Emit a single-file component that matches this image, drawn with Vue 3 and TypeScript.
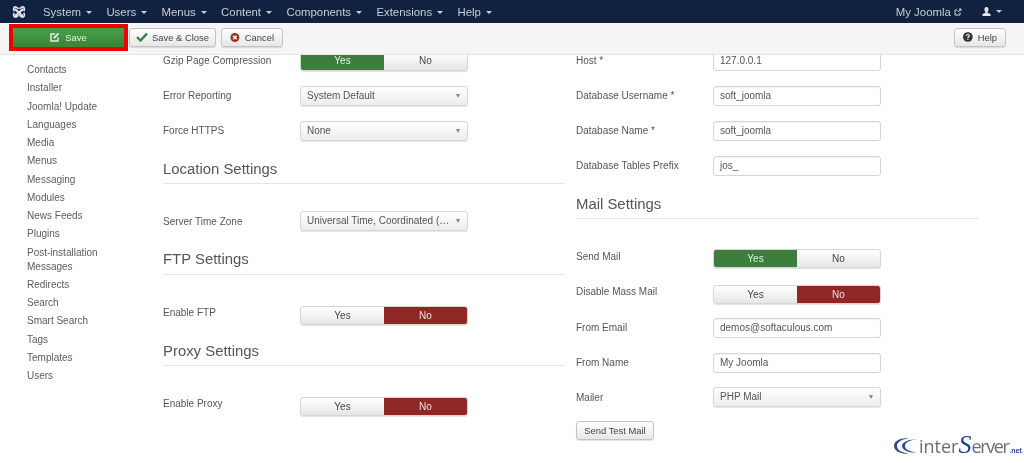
<script setup lang="ts">
const menus: string[] = ['System', 'Users', 'Menus', 'Content', 'Components', 'Extensions', 'Help']
const side: string[] = ['Contacts', 'Installer', 'Joomla! Update', 'Languages', 'Media', 'Menus', 'Messaging', 'Modules', 'News Feeds', 'Plugins', 'Post-installation Messages', 'Redirects', 'Search', 'Smart Search', 'Tags', 'Templates', 'Users']
const dbRows: { label: string; value: string }[] = [
  { label: 'Database Username *', value: 'soft_joomla' },
  { label: 'Database Name *', value: 'soft_joomla' },
  { label: 'Database Tables Prefix', value: 'jos_' },
]
</script>

<template>
  <div class="page">
    <header class="nav">
      <svg class="logo" width="14" height="14" viewBox="0 0 14 14" aria-hidden="true">
        <g fill="none" stroke="#dfe3ea" stroke-linecap="round">
          <path d="M3.500 4.500C5 6 8 9 10 10.500M10.500 4.500C9 6 6 9 3.500 10.500" stroke-width="2.200" />
          <path d="M2 5.500C1 3.500 2 1.500 4 2c1 .2 1.500 1 2 1.500M12 5.500c1-2 0-4-2-3.500-1 .2-1.500 1-2 1.500M2 8.500c-1 2 0 4 2 3.500 1-.2 1.500-1 2-1.500M12 8.500c1 2 0 4-2 3.500-1-.2-1.500-1-2-1.500" stroke-width="1.700" />
        </g>
      </svg>
      <span v-for="m in menus" :key="m" class="menu">{{ m }}<i class="caret"></i></span>
      <span class="nav-right">
        <span class="site">My Joomla
          <svg width="8" height="8" viewBox="0 0 8 8" aria-hidden="true"><path d="M6 4.500V7H1V2h2.500M4 4l3-3M5 1h2v2" fill="none" stroke="#d5dae3" stroke-width="1" /></svg>
        </span>
        <span class="user">
          <svg width="9" height="10" viewBox="0 0 9 10" aria-hidden="true"><path d="M4.500 0C3 0 2.400 1 2.400 2.400c0 1 .5 2 1 2.400v1L.5 7v2h8V7l-3-1.200v-1c.5-.4 1-1.400 1-2.400C6.500 1 6 0 4.500 0z" fill="#e2e5eb" /></svg>
          <i class="caret"></i>
        </span>
      </span>
    </header>

    <div class="toolbar">
      <div class="save-mark">
        <button class="btn save">
          <svg width="10" height="10" viewBox="0 0 10 10" aria-hidden="true"><path d="M8 5.500V9H1V2h4" fill="none" stroke="#e6f0e6" stroke-width="1.400" /><path d="M3.500 5L8 .8l1.200 1.200L5 6.500H3.500z" fill="#e6f0e6" /></svg>
          Save
        </button>
      </div>
      <button class="btn close">
        <svg width="12" height="10" viewBox="0 0 12 10" aria-hidden="true"><path d="M1 5l3.500 3.500L11 1.500" fill="none" stroke="#3f7d3f" stroke-width="2.400" /></svg>
        Save &amp; Close
      </button>
      <button class="btn cancel">
        <svg width="11" height="11" viewBox="0 0 11 11" aria-hidden="true"><circle cx="5.500" cy="5.500" r="5" fill="#a52a24" /><path d="M3.500 3.500l4 4M7.500 3.500l-4 4" stroke="#fff" stroke-width="1.600" /></svg>
        Cancel
      </button>
      <button class="btn help">
        <svg width="10" height="10" viewBox="0 0 10 10" aria-hidden="true"><circle cx="5" cy="5" r="5" fill="#333" /><path d="M3.500 4c0-1 .7-1.500 1.500-1.500S6.500 3 6.500 3.800 5 5 5 6" fill="none" stroke="#fff" stroke-width="1.100" /><rect x="4.400" y="6.800" width="1.200" height="1.200" fill="#fff" /></svg>
        Help
      </button>
    </div>

    <main class="content">
      <aside class="side">
        <a v-for="s in side" :key="s" class="side-item">{{ s }}</a>
      </aside>

      <section class="col">
        <div class="row first"><label>Gzip Page Compression</label>
          <div class="toggle tall"><span class="on-yes">Yes</span><span>No</span></div>
        </div>
        <div class="row"><label>Error Reporting</label><div class="select">System Default<i class="sel-caret"></i></div></div>
        <div class="row"><label>Force HTTPS</label><div class="select">None<i class="sel-caret"></i></div></div>
        <h3>Location Settings</h3>
        <div class="row"><label class="flat">Server Time Zone</label><div class="select">Universal Time, Coordinated (…<i class="sel-caret"></i></div></div>
        <h3 class="h-tight">FTP Settings</h3>
        <div class="row tog"><label class="up3">Enable FTP</label>
          <div class="toggle"><span>Yes</span><span class="on-no">No</span></div>
        </div>
        <h3 class="h-tight2">Proxy Settings</h3>
        <div class="row tog"><label class="up3">Enable Proxy</label>
          <div class="toggle"><span>Yes</span><span class="on-no">No</span></div>
        </div>
      </section>

      <section class="col right">
        <div class="row first"><label>Host *</label><div class="input">127.0.0.1</div></div>
        <div v-for="d in dbRows" :key="d.label" class="row"><label>{{ d.label }}</label><div class="input">{{ d.value }}</div></div>
        <h3 class="h-mail">Mail Settings</h3>
        <div class="row tog2"><label class="up2">Send Mail</label>
          <div class="toggle"><span class="on-yes">Yes</span><span>No</span></div>
        </div>
        <div class="row tog3"><label class="up3">Disable Mass Mail</label>
          <div class="toggle"><span>Yes</span><span class="on-no">No</span></div>
        </div>
        <div class="row"><label>From Email</label><div class="input">demos@softaculous.com</div></div>
        <div class="row tight"><label>From Name</label><div class="input">My Joomla</div></div>
        <div class="row"><label class="flat">Mailer</label><div class="select">PHP Mail<i class="sel-caret"></i></div></div>
        <button class="btn test">Send Test Mail</button>
      </section>
    </main>

    <div class="brand">
      <svg class="brand-c" width="24" height="16" viewBox="0 0 24 16" aria-hidden="true">
        <path d="M15 .6C7 -.6 0 3 0 8s7 8.600 15 7.400C9 15 3 12.500 3 8s6-7 12-7.400z" fill="#2c4a94" />
        <path d="M23 1.600C15 .6 8 4 8 8s7 7.400 15 6.400C17 14 11 12 11 8s6-6 12-6.400z" fill="#2c4a94" />
      </svg>
      <span class="brand-a">inter</span><span class="brand-s">S</span><span class="brand-a tightx">erver</span><span class="brand-n">.net</span>
    </div>
  </div>
</template>

<style scoped>
.page {
  position: relative;
  width: 1024px;
  height: 463px;
  overflow: hidden;
  background: #fff;
  font-family: "Liberation Sans", Arial, sans-serif;
  font-size: 10px;
  color: #555;
  display: flex;
  flex-direction: column;
  filter: blur(0.35px);
}
.nav {
  flex: none;
  height: 23px;
  background: #10223f;
  color: #c8ced8;
  display: flex;
  align-items: center;
  font-size: 11.400px;
  padding-left: 12px;
}
.logo { margin-right: 17px; }
.menu { margin-right: 14.400px; white-space: nowrap; }
.caret {
  display: inline-block;
  margin-left: 5px;
  vertical-align: 2px;
  border-left: 3px solid transparent;
  border-right: 3px solid transparent;
  border-top: 3px solid #c8ced8;
}
.nav-right { margin-left: auto; display: flex; align-items: center; padding-right: 22px; }
.site { margin-right: 20px; }
.user { display: flex; align-items: center; }
.toolbar {
  flex: none;
  position: relative;
  z-index: 2;
  height: 32px;
  box-sizing: border-box;
  background: #f5f5f5;
  border-bottom: 1px solid #e4e4e4;
  display: flex;
  align-items: center;
  padding: 0 18px 3px 9px;
}
.btn {
  font: inherit;
  font-size: 9.400px;
  color: #444;
  height: 19px;
  padding: 0 8px;
  box-sizing: border-box;
  border: 1px solid #c4c4c4;
  border-radius: 3px;
  background: linear-gradient(#fefefe, #e7e7e7);
  box-shadow: 0 1px 1px rgba(0,0,0,.12);
  display: inline-flex;
  align-items: center;
  justify-content: center;
  gap: 5px;
  white-space: nowrap;
}
.save-mark {
  width: 119px;
  height: 27px;
  box-sizing: border-box;
  border: 4px solid #f00000;
  margin-right: 1px;
  display: flex;
}
.save {
  width: 100%;
  height: 100%;
  border: 0;
  border-radius: 0;
  color: #e8f2e8;
  background: linear-gradient(#47a147, #398439);
  box-shadow: none;
}
.close { width: 87px; gap: 4px; padding: 0 6px; }
.cancel { margin-left: 5px; width: 62px; }
.help { margin-left: auto; width: 52px; }
.content { flex: 1; display: flex; min-height: 0; position: relative; }
.side { width: 163px; flex: none; padding: 8px 0 0 27px; box-sizing: border-box; }
.side-item {
  display: block;
  width: 80px;
  line-height: 14px;
  margin-bottom: 4.260px;
  color: #5c5c5c;
}
.col { width: 402px; flex: none; margin-top: -4px; }
.right { margin-left: 11px; }
.row { display: flex; align-items: center; height: 20px; margin-bottom: 15px; }
.row label { width: 137px; flex: none; color: #555; position: relative; top: -1px; }
.row label.flat { top: 0; }
.row label.up2 { top: -2px; }
.row label.up3 { top: -3px; }
.select, .input {
  width: 168px;
  height: 20px;
  box-sizing: border-box;
  border: 1px solid #d6d6d6;
  border-radius: 3px;
  padding: 0 6px;
  line-height: 18px;
  white-space: nowrap;
  overflow: hidden;
  color: #555;
}
.input { box-shadow: inset 0 1px 1px rgba(0,0,0,.05); background: #fff; }
.select {
  position: relative;
  background: linear-gradient(#fff, #ececec);
  box-shadow: 0 1px 1px rgba(0,0,0,.1);
}
.sel-caret {
  position: absolute;
  right: 7px;
  top: 7px;
  border-left: 2.500px solid transparent;
  border-right: 2.500px solid transparent;
  border-top: 4px solid #888;
}
.toggle {
  width: 168px;
  height: 19px;
  display: flex;
  box-sizing: border-box;
  border-radius: 3px;
  overflow: hidden;
  border: 1px solid #d6d6d6;
  box-shadow: 0 1px 1px rgba(0,0,0,.12);
  background: linear-gradient(#fff, #e6e6e6);
  color: #444;
}
.tall { height: 20px; }
.toggle span { flex: 1; text-align: center; line-height: 17px; }
.tall span { line-height: 18px; }
.on-yes { background: #3b7f3b; color: #e6efe6; }
.on-no { background: #8f2725; color: #f0e0e0; }
h3 {
  font-weight: 400;
  font-size: 14.900px;
  line-height: 18px;
  color: #555;
  margin: 19px 0 27px;
  padding-bottom: 4px;
  border-bottom: 1px solid #e6e6e6;
  height: 19px;
  box-sizing: content-box;
}
.h-tight { margin-top: 19px; margin-bottom: 31px; padding-bottom: 5px; }
.h-tight2 { margin-top: 18px; margin-bottom: 31px; padding-bottom: 4px; }
.h-mail { margin-top: 19px; margin-bottom: 30px; padding-bottom: 4px; }
.tog { height: 18px; margin-bottom: 18px; }
.tog2 { height: 19px; margin-bottom: 17px; }
.tog3 { height: 18px; margin-bottom: 15px; }
.tight { margin-bottom: 14px; }
.test { width: 78px; height: 19px; margin-top: -1px; }
.brand {
  position: absolute;
  left: 894px;
  top: 432px;
  display: flex;
  align-items: baseline;
  color: #666d7c;
  font-size: 18px;
  line-height: 26px;
  font-family: "Open Sans", "Liberation Sans", sans-serif;
  white-space: nowrap;
}
.brand-c { margin-right: 1px; align-self: flex-start; margin-top: 6px; }
.brand-s { color: #1f3f8a; font-family: "Liberation Serif", serif; font-style: italic; font-size: 26px; line-height: 26px; }
.tightx { letter-spacing: -1.400px; }
.brand-n { font-size: 6.500px; color: #2c4a94; font-weight: 700; margin-left: 1px; }
</style>
